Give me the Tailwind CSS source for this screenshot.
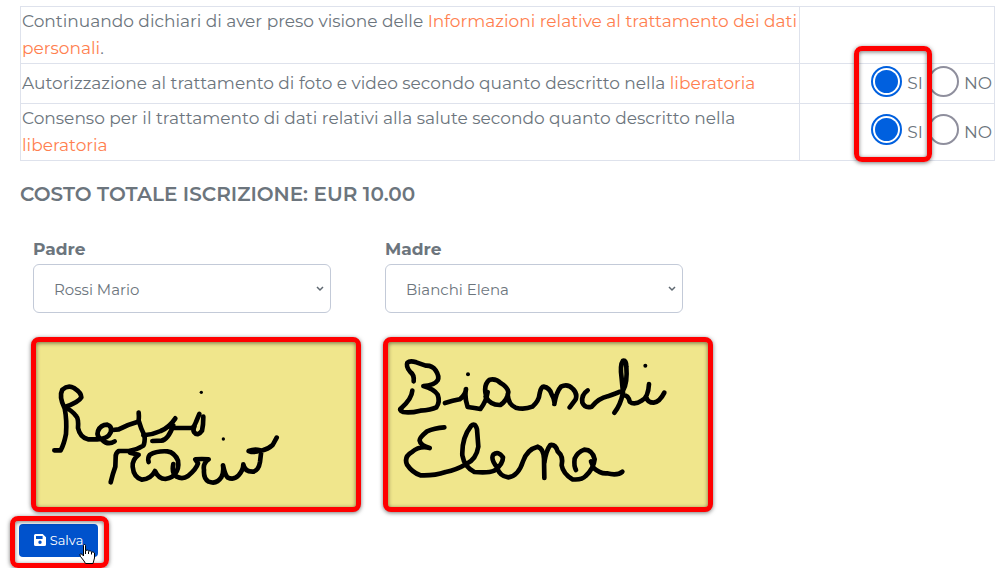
<!DOCTYPE html>
<html lang="it">

<head>
    <meta charset="UTF-8">
    <meta name="viewport" content="width=device-width, initial-scale=1.0">
    <title>Iscrizione</title>
    <script src="https://cdn.jsdelivr.net/npm/@tailwindcss/browser@4"></script>
</head>

<body class="bg-white text-[#6c757d] font-['Montserrat','Inter',sans-serif] text-[17px] leading-[27px]">

    <form class="pl-5 pr-[5px] pt-1.5">
        <!-- Consents -->
        <div class="relative">
            <table class="w-full border-collapse">
                <tbody>
                    <tr class="h-[57px]">
                        <td class="border border-[#dee2ec] pl-px py-px">Continuando dichiari di aver preso visione delle
                            <a href="#" class="text-[#ff7f50]">Informazioni relative al trattamento dei dati
                                personali</a>.</td>
                        <td class="border border-[#dee2ec] w-[195px]"></td>
                    </tr>
                    <tr class="h-10">
                        <td class="border border-[#dee2ec] pl-px">Autorizzazione al trattamento di foto e video secondo
                            quanto descritto nella <a href="#" class="text-[#ff7f50]">liberatoria</a></td>
                        <td class="border border-[#dee2ec] px-0.5">
                            <div class="flex justify-end items-center gap-[5px]">
                                <input type="radio" name="foto" id="fotoSi" checked
                                    class="appearance-none size-[31px] mb-[5px] rounded-full border-2 border-[#8f8f9d] p-0.5 bg-clip-content checked:border-[#0060df] checked:bg-[#0060df]">
                                <label for="fotoSi">SI</label>
                                <input type="radio" name="foto" id="fotoNo"
                                    class="appearance-none size-[31px] mb-[5px] rounded-full border-2 border-[#8f8f9d] p-0.5 bg-clip-content checked:border-[#0060df] checked:bg-[#0060df]">
                                <label for="fotoNo">NO</label>
                            </div>
                        </td>
                    </tr>
                    <tr class="h-[57px]">
                        <td class="border border-[#dee2ec] pl-px py-px">Consenso per il trattamento di dati relativi
                            alla salute secondo quanto descritto nella <a href="#"
                                class="text-[#ff7f50]">liberatoria</a></td>
                        <td class="border border-[#dee2ec] px-0.5">
                            <div class="flex justify-end items-center gap-[5px]">
                                <input type="radio" name="salute" id="saluteSi" checked
                                    class="appearance-none size-[31px] mb-[5px] rounded-full border-2 border-[#8f8f9d] p-0.5 bg-clip-content checked:border-[#0060df] checked:bg-[#0060df]">
                                <label for="saluteSi">SI</label>
                                <input type="radio" name="salute" id="saluteNo"
                                    class="appearance-none size-[31px] mb-[5px] rounded-full border-2 border-[#8f8f9d] p-0.5 bg-clip-content checked:border-[#0060df] checked:bg-[#0060df]">
                                <label for="saluteNo">NO</label>
                            </div>
                        </td>
                    </tr>
                </tbody>
            </table>
            <div
                class="absolute top-10 -bottom-px right-[63px] w-[78px] rounded-lg border-5 border-[#f00] shadow-[0_1px_4px_#0008,inset_0_1px_4px_#0008] pointer-events-none">
            </div>
        </div>

        <h2 class="mt-5 font-semibold text-[20px] leading-[27px]">COSTO TOTALE ISCRIZIONE: EUR 10.00</h2>

        <!-- Signatures -->
        <div class="flex mt-7 pl-[13px]">
            <div class="w-[352px]">
                <label for="padre" class="block font-bold">Padre</label>
                <div class="relative w-[298px] mt-px">
                    <select id="padre"
                        class="appearance-none w-full h-[49px] pl-5 pt-0.5 text-[15px] rounded-md border border-[#c3cad8] bg-white">
                        <option>Rossi Mario</option>
                    </select>
                    <svg class="absolute right-[7px] top-[22px] w-2 h-[6px] pointer-events-none" viewBox="0 0 8 6"
                        fill="none" stroke="#5f6871" stroke-width="1.5">
                        <path d="M1 1l3 3 3-3" />
                    </svg>
                </div>
                <div
                    class="mt-6 -ml-0.5 w-[330px] rounded-lg border-5 border-[#f00] bg-[#f0e68c] shadow-[0_1px_4px_#0008,inset_0_1px_4px_#0008]">
                    <svg class="block w-full" viewBox="48 36 960 495" fill="none" stroke="#000" stroke-width="14"
                        stroke-linecap="round" stroke-linejoin="round" role="img" aria-label="Firma padre">
                        <path
                            d="M103 361H122Q132 343 138 312Q141 270 134 235Q116 200 127 179Q144 164 162 174Q184 188 184 202Q176 217 134 231Q157 242 169 259Q176 267 174 294Q180 322 204 328H232Q264 327 272 307Q277 288 262 284Q242 284 234 303Q228 320 247 330Q264 347 284 334" />
                        <path
                            d="M278 300L296 298Q324 283 354 275Q358 268 356 248M356 272Q363 297 374 318Q375 338 370 347Q350 360 326 363H296Q286 370 287 382L286 410Q278 432 272 457M330 368L356 374Q336 390 338 410Q341 442 366 449Q393 447 405 423Q416 447 436 447Q460 442 465 432Q478 416 474 392Q464 367 442 364Q410 362 390 374Q382 383 386 396" />
                        <path
                            d="M370 316Q400 313 422 303Q448 292 466 265M460 286Q444 330 424 332L397 333M460 294H514Q522 292 528 276L538 252M550 260Q550 285 546 302Q533 321 522 306Q518 300 524 287" />
                        <path
                            d="M460 402Q454 430 470 440Q488 449 504 438Q529 417 534 400L526 388Q545 386 566 388Q548 400 552 420Q550 446 566 455Q590 464 604 442Q612 427 609 406Q615 434 622 442Q642 452 656 436Q670 420 670 403Q674 426 700 425Q716 421 720 396L724 362Q744 358 758 345L770 323" />
                        <path d="M686 363Q704 356 720 361Q704 370 686 363Z" fill="#000" />
                        <circle cx="544" cy="187" r="5" fill="#000" stroke="none" />
                        <circle cx="610" cy="327" r="5" fill="#000" stroke="none" />
                    </svg>
                </div>
            </div>
            <div class="w-[352px]">
                <label for="madre" class="block font-bold">Madre</label>
                <div class="relative w-[298px] mt-px">
                    <select id="madre"
                        class="appearance-none w-full h-[49px] pl-5 pt-0.5 text-[15px] rounded-md border border-[#c3cad8] bg-white">
                        <option>Bianchi Elena</option>
                    </select>
                    <svg class="absolute right-[7px] top-[22px] w-2 h-[6px] pointer-events-none" viewBox="0 0 8 6"
                        fill="none" stroke="#5f6871" stroke-width="1.5">
                        <path d="M1 1l3 3 3-3" />
                    </svg>
                </div>
                <div
                    class="mt-6 -ml-0.5 w-[330px] rounded-lg border-5 border-[#f00] bg-[#f0e68c] shadow-[0_1px_4px_#0008,inset_0_1px_4px_#0008]">
                    <svg class="block w-full" viewBox="41 36 960 495" fill="none" stroke="#000" stroke-width="14"
                        stroke-linecap="round" stroke-linejoin="round" role="img" aria-label="Firma madre">
                        <path
                            d="M118 154Q120 134 108 126Q94 110 99 98Q107 91 126 97L154 107Q174 106 184 121Q196 139 190 151Q180 167 147 168Q179 177 190 194Q198 216 186 232Q170 240 138 242Q106 250 87 246Q71 240 82 233Q112 207 114 182" />
                        <path
                            d="M212 219Q236 212 256 208Q274 195 275 177Q270 202 280 231Q302 234 318 237Q336 214 340 186M334 192Q328 163 346 149Q366 145 380 160Q398 170 402 186Q400 210 378 225Q348 226 334 200M400 193Q402 224 424 233Q450 240 474 230Q494 213 496 190Q500 170 508 170Q526 173 532 193Q542 210 540 222Q546 185 560 170Q580 160 596 177Q610 191 604 208L586 232" />
                        <path
                            d="M640 181Q620 194 624 218Q632 236 652 230Q674 204 700 199Q728 188 746 182Q760 158 756 110Q756 90 746 92Q736 106 742 145L746 188Q738 226 720 248M744 196Q762 194 766 215Q780 227 802 212Q822 202 824 162M816 202Q820 218 838 218Q856 216 870 188" />
                        <path
                            d="M210 292Q180 294 158 304Q134 324 136 332Q138 346 166 354Q136 346 113 366Q88 380 98 404Q114 428 138 436Q178 438 214 426Q246 420 276 402Q306 388 312 350L308 298Q302 276 290 288Q262 324 264 376Q270 410 300 426Q342 430 360 422Q386 404 386 382Q372 362 357 374Q348 386 368 412Q376 439 402 442Q432 438 446 394Q458 358 490 350Q508 356 509 386L510 444" />
                        <path
                            d="M510 396Q516 360 528 345Q544 343 550 364Q568 379 562 406Q566 430 594 448Q622 451 634 438Q658 416 661 388Q655 360 630 359Q609 367 601 386Q598 408 605 420M650 394L658 414Q678 432 698 430Q730 438 744 425" />
                        <circle cx="281" cy="133" r="6" fill="#000" stroke="none" />
                        <circle cx="813" cy="107" r="6" fill="#000" stroke="none" />
                    </svg>
                </div>
            </div>
        </div>

        <!-- Save -->
        <div class="relative flex w-[99px] h-[52px] -ml-2.5 mt-1 items-center justify-center">
            <button type="button"
                class="flex items-center justify-center gap-1 w-[79px] h-[33px] mb-1 mr-0.5 rounded-[4px] bg-[#0052cc] text-white text-[13px]">
                <svg class="size-3" viewBox="0 0 12 12" fill="#fff" fill-rule="evenodd">
                    <path
                        d="M1.5 0H8.7L12 3.3V10.5Q12 12 10.5 12H1.5Q0 12 0 10.5V1.5Q0 0 1.5 0ZM2 2V5H8.6V2ZM6 6.6A1.7 1.7 0 1 0 6 10A1.7 1.7 0 1 0 6 6.6Z" />
                </svg>
                Salva
            </button>
            <div
                class="absolute inset-0 rounded-lg border-5 border-[#f00] shadow-[0_1px_4px_#0008,inset_0_1px_4px_#0008] pointer-events-none">
            </div>
            <!-- hand pointer -->
            <svg class="absolute left-[69px] top-[28px] w-[17px] h-5 pointer-events-none" viewBox="0 0 17 20"
                fill="#fff" stroke="#000" stroke-width="1" stroke-linejoin="round">
                <path
                    d="M4.5 12V1.5Q4.5 .5 5.5 .5Q6.5 .5 6.5 1.5V6.5Q8.8 5.4 9.5 7Q11.6 6.2 12.5 8Q14.2 7.4 15.5 9V14L14 19.5H6.5L5 17L1.5 12.5Q.3 10.4 1.5 9.8Q2.8 9.5 4.5 12Z" />
                <path d="M6.5 6.5V10M9.5 7.5V10M12.5 8V10.5" fill="none" />
            </svg>
        </div>
    </form>

</body>

</html>
